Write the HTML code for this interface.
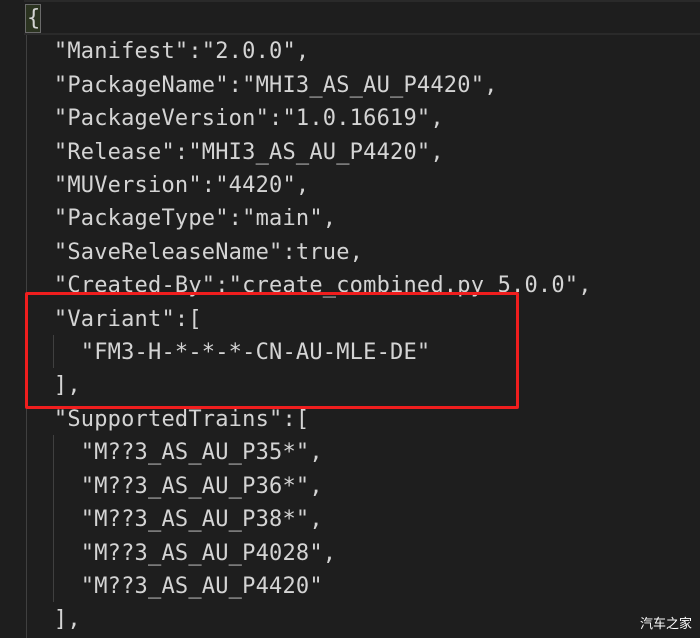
<!DOCTYPE html>
<html><head><meta charset="utf-8"><style>
body{margin:0;width:700px;height:638px;background:#1e1e1e;overflow:hidden;position:relative;font-family:"DejaVu Sans Mono","Liberation Mono",monospace;}
.code{position:absolute;left:27px;top:2px;font-size:22px;line-height:33.4px;color:#d4d4d4;white-space:pre;letter-spacing:0.2px;}
.hl{position:absolute;left:24px;top:0;width:676px;height:31px;border-top:2px solid #2a2a2a;border-bottom:2px solid #2a2a2a;background:#1e1e1e}
.cur{position:absolute;left:25px;top:4px;width:14px;height:27px;border:1px solid #6a6a6a;background:#2b3320}
.g{position:absolute;width:1px;background:#404040}
.box{position:absolute;left:25px;top:292px;width:488px;height:111px;border:3px solid #f01e1e;border-radius:2px}
.wm{position:absolute;right:8px;bottom:6px;color:#fff;font-size:13px;font-family:"Noto Sans CJK SC",sans-serif}
</style></head><body>
<div class="hl"></div>
<div class="cur"></div>
<div class="g" style="left:26px;top:35px;height:603px"></div>
<div class="g" style="left:53px;top:335px;height:33px"></div>
<div class="g" style="left:53px;top:435px;height:167px"></div>
<div class="code">{
  "Manifest":"2.0.0",
  "PackageName":"MHI3_AS_AU_P4420",
  "PackageVersion":"1.0.16619",
  "Release":"MHI3_AS_AU_P4420",
  "MUVersion":"4420",
  "PackageType":"main",
  "SaveReleaseName":true,
  "Created-By":"create_combined.py 5.0.0",
  "Variant":[
    "FM3-H-*-*-*-CN-AU-MLE-DE"
  ],
  "SupportedTrains":[
    "M??3_AS_AU_P35*",
    "M??3_AS_AU_P36*",
    "M??3_AS_AU_P38*",
    "M??3_AS_AU_P4028",
    "M??3_AS_AU_P4420"
  ],</div>
<div class="box"></div>
<div class="wm">汽车之家</div>
</body></html>
